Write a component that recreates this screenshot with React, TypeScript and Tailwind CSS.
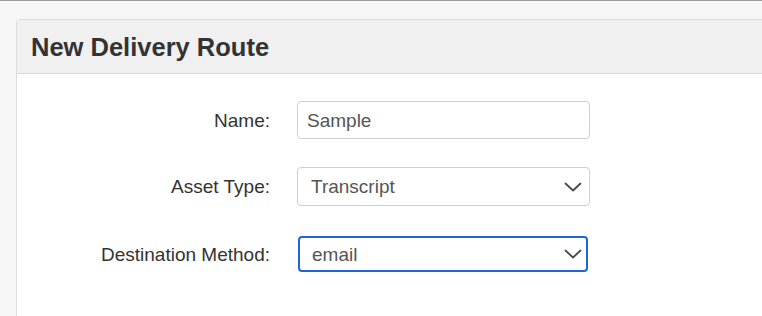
import React from 'react';

const Chevron = () => (
  <svg width="18" height="10" viewBox="0 0 18 10" fill="none" className="shrink-0">
    <path d="M1.5 1.5 L9 8.5 L16.5 1.5" stroke="#4a4a4a" strokeWidth="1.8" strokeLinecap="round" strokeLinejoin="round" />
  </svg>
);

interface RowProps {
  label: string;
  children: React.ReactNode;
}

const Row: React.FC<RowProps> = ({ label, children }) => (
  <div className="flex items-center">
    <label className="w-[253px] text-right text-[19px] text-[#333] pt-[2px]">{label}</label>
    <div className="ml-[27px]">{children}</div>
  </div>
);

export default function App() {
  return (
    <div
      className="w-[762px] h-[316px] overflow-hidden bg-[#f7f7f7] border-t border-[#9a9a9a]"
      style={{ fontFamily: '"Liberation Sans", Arial, sans-serif' }}
    >
      <div className="ml-4 mt-[18px] w-[800px] h-[320px] bg-white border border-[#dcdcdc] rounded-tl-[4px]">
        <div className="h-[54px] bg-[#f0f0f0] border-b border-[#dcdcdc] flex items-center pl-[14px]">
          <h1 className="text-[25.5px] font-bold text-[#333] pt-px">New Delivery Route</h1>
        </div>
        <div className="flex flex-col pt-[27px] gap-[28px]">
          <Row label="Name:">
            <div className="w-[293px] h-[38px] border border-[#cfcfcf] rounded-[4px] flex items-center px-[9px] pt-[2px] text-[19px] text-[#555]">
              Sample
            </div>
          </Row>
          <Row label="Asset Type:">
            <div className="w-[293px] h-[39px] border border-[#cfcfcf] rounded-[4px] flex items-center justify-between pl-[13px] pr-[7px] text-[19px] text-[#555]">
              <span className="pt-[2px]">Transcript</span>
              <Chevron />
            </div>
          </Row>
          <div className="mt-[2px]">
            <Row label="Destination Method:">
              <div className="ml-px w-[290px] h-[36px] border-2 border-[#1f65d6] rounded-[4px] flex items-center justify-between pl-[12px] pr-[4px] text-[19px] text-[#555]">
                <span className="pt-[2px]">email</span>
                <Chevron />
              </div>
            </Row>
          </div>
        </div>
      </div>
    </div>
  );
}
